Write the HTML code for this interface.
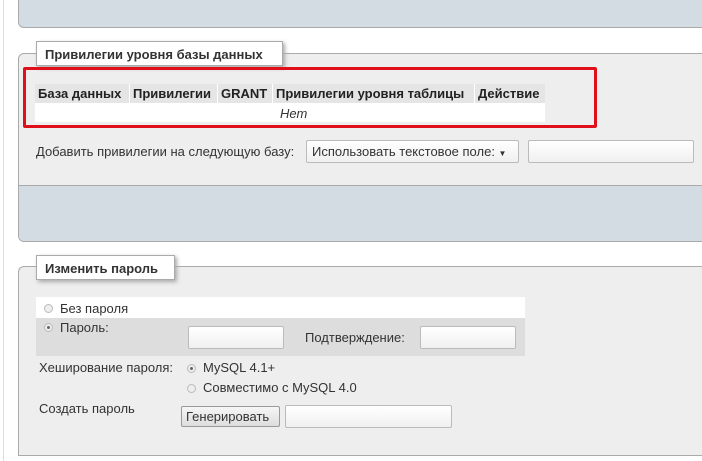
<!DOCTYPE html><html><head><meta charset="utf-8"><style>
body{margin:0;width:702px;height:461px;overflow:hidden;background:#fff;font-family:"Liberation Sans",sans-serif;font-size:12px;color:#333;position:relative}
.a{position:absolute}
.inp{position:absolute;background:linear-gradient(#fff,#f0f0f0);border:1px solid #bbb;border-radius:2px;box-sizing:border-box}
.rad{position:absolute;width:9px;height:9px;border-radius:50%;border:1px solid #bbb;background:#eee;box-sizing:border-box}
.rad.on::after{content:"";position:absolute;left:2px;top:2px;width:3px;height:3px;border-radius:50%;background:#666}
.lg{position:absolute;background:#fff;border:1px solid #aaa;box-shadow:2px 2px 4px #aaa;font-weight:bold;font-size:13px;color:#333;padding:5px 8px;box-sizing:border-box}
</style></head><body>
<div class="a" style="left:3px;top:0;width:1px;height:461px;background:#ddd"></div>
<div class="a" style="left:18px;top:-5px;width:700px;height:33px;background:#d4dce3;border:1px solid #aaa;border-radius:0 0 0 6px;box-sizing:border-box"></div>
<div class="a" style="left:18px;top:53px;width:700px;height:189px;background:#eee;border:1px solid #aaa;border-radius:6px 0 0 6px;box-sizing:border-box;overflow:hidden">
<div class="a" style="left:0;top:131px;width:700px;height:57px;background:#d4dce3;border-top:1px solid #aaa"></div></div>
<div class="lg" style="left:36px;top:41px;width:247px;height:25px">Привилегии уровня базы данных</div>
<div class="a" style="left:35px;top:84px;width:510px;height:38px;background:#fff"></div>
<div class="a" style="left:35px;top:84px;height:19px;font-weight:bold;font-size:13px;color:#222;display:flex;line-height:19px">
<div style="width:94px;background:#e5e5e5;padding-left:3px;box-sizing:border-box">База данных</div>
<div style="width:1px"></div><div style="width:87px;background:#e5e5e5;padding-left:3px;box-sizing:border-box">Привилегии</div>
<div style="width:1px"></div><div style="width:54px;background:#e5e5e5;padding-left:3px;box-sizing:border-box">GRANT</div>
<div style="width:1px"></div><div style="width:201px;background:#e5e5e5;padding-left:3px;box-sizing:border-box">Привилегии уровня таблицы</div>
<div style="width:1px"></div><div style="width:70px;background:#e5e5e5;padding-left:3px;box-sizing:border-box">Действие</div></div>
<div class="a" style="left:280px;top:106px;font-style:italic;font-size:13px">Нет</div>
<div class="a" style="left:23px;top:67px;width:574px;height:61px;border:3px solid #e0101a;border-radius:2px;box-sizing:border-box"></div>
<div class="a" style="left:36px;top:144px;font-size:13px">Добавить привилегии на следующую базу:</div>
<div class="inp" style="left:306px;top:140px;width:213px;height:23px;font-size:13px;padding:3px 5px">Использовать текстовое поле: <span style="font-size:8px">▼</span></div>
<div class="inp" style="left:528px;top:140px;width:166px;height:23px"></div>
<div class="a" style="left:18px;top:266px;width:700px;height:190px;background:#eee;border:1px solid #aaa;border-right:none;border-radius:6px 0 0 0;box-sizing:border-box"></div>
<div class="lg" style="left:36px;top:255px;width:139px;height:25px">Изменить пароль</div>
<div class="a" style="left:36px;top:297px;width:489px;height:21px;background:#fff"></div>
<div class="a" style="left:36px;top:318px;width:489px;height:38px;background:#ddd"></div>
<div class="rad" style="left:44px;top:304px"></div><div class="a" style="left:60px;top:301px;font-size:13px">Без пароля</div>
<div class="rad on" style="left:44px;top:323px"></div><div class="a" style="left:60px;top:320px;font-size:13px">Пароль:</div>
<div class="inp" style="left:188px;top:326px;width:96px;height:23px"></div>
<div class="a" style="left:305px;top:330px;font-size:13px">Подтверждение:</div>
<div class="inp" style="left:420px;top:326px;width:96px;height:23px"></div>
<div class="a" style="left:39px;top:360px;font-size:13px">Хеширование пароля:</div>
<div class="rad on" style="left:187px;top:364px"></div><div class="a" style="left:203px;top:360px;font-size:13px">MySQL 4.1+</div>
<div class="rad" style="left:187px;top:384px"></div><div class="a" style="left:203px;top:380px;font-size:13px">Совместимо с MySQL 4.0</div>
<div class="a" style="left:39px;top:401px;font-size:13px">Создать пароль</div>
<div class="inp" style="left:181px;top:406px;width:99px;height:21px;background:linear-gradient(#f6f6f6,#ddd);border-color:#999;font-size:13px;padding:2px 4px">Генерировать</div>
<div class="inp" style="left:285px;top:405px;width:167px;height:23px"></div>
</body></html>
